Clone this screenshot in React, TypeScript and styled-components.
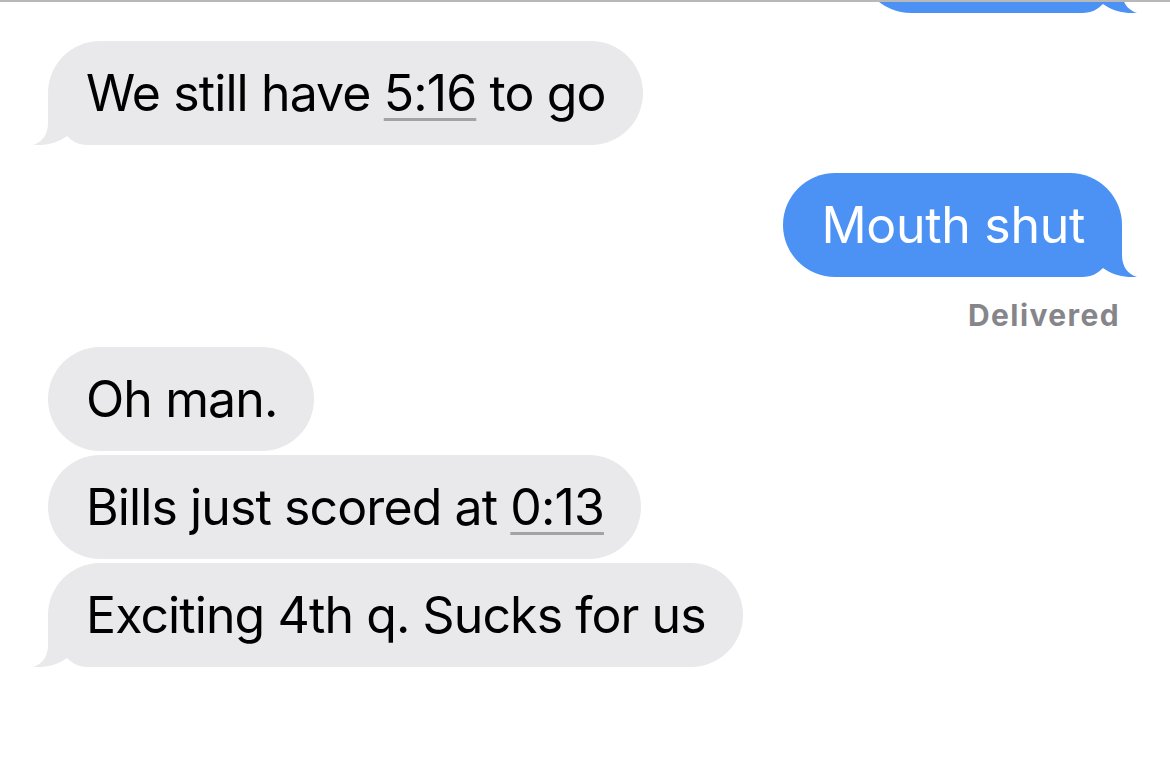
import React from "react";
import styled, { createGlobalStyle } from "styled-components";

const GlobalStyle = createGlobalStyle`
  html, body {
    margin: 0;
    padding: 0;
    background: #ffffff;
    overflow: hidden;
  }
  body {
    font-family: Inter, "Noto Sans", "Liberation Sans", sans-serif;
    -webkit-font-smoothing: antialiased;
  }
`;

const GRAY = "#e9e9eb";
const BLUE = "#4b92f4";

const Screen = styled.div`
  width: 1170px;
  height: 762px;
  overflow: hidden;
  border-top: 2px solid #b8b8b8;
  box-sizing: border-box;
`;

const Thread = styled.div`
  display: flex;
  flex-direction: column;
  padding: 0 48px;
  margin-top: -93px;
`;

interface RowProps {
  mine?: boolean;
  gap?: number;
}
const Row = styled.div<RowProps>`
  display: flex;
  justify-content: ${({ mine }) => (mine ? "flex-end" : "flex-start")};
  margin-top: ${({ gap }) => gap ?? 0}px;
`;

interface BubbleProps {
  mine?: boolean;
}
const Bubble = styled.div<BubbleProps>`
  position: relative;
  z-index: 0;
  display: flex;
  align-items: center;
  height: 104px;
  padding: 0 37px 0 38px;
  border-radius: 52px;
  background: ${({ mine }) => (mine ? BLUE : GRAY)};
  color: ${({ mine }) => (mine ? "#ffffff" : "#000000")};
  font-size: 50px;
  letter-spacing: ${({ mine }) => (mine ? "-0.3px" : "-0.9px")};
  white-space: nowrap;
  box-sizing: border-box;
`;

const Filler = styled.span`
  display: inline-block;
  width: 188px;
`;

const TimeLink = styled.span`
  text-decoration: underline;
  text-decoration-color: #a3a3a6;
  text-decoration-thickness: 3px;
  text-underline-offset: 7px;
`;

interface TailProps {
  mine?: boolean;
}
const TailSvg = styled.svg<TailProps>`
  position: absolute;
  z-index: -1;
  bottom: 0;
  width: 70px;
  height: 50px;
  ${({ mine }) =>
    mine
      ? "right: -16px; transform: scaleX(-1);"
      : "left: -16px;"}
`;

const Status = styled.div`
  align-self: flex-end;
  margin-top: 20px;
  margin-right: 2px;
  font-size: 30px;
  font-weight: 700;
  color: #86868a;
  letter-spacing: 1.4px;
`;

const Tail = ({ mine }: { mine?: boolean }) => (
  <TailSvg mine={mine} viewBox="0 0 70 50" aria-hidden>
    <path
      d="M16 0 L16 28 C16 40 10 47 1 50 C12 51 26 48 35 41 C40 46 46 50 56 50 L70 50 L70 0 Z"
      fill={mine ? BLUE : GRAY}
    />
  </TailSvg>
);

export default function App() {
  return (
    <>
      <GlobalStyle />
      <Screen>
        <Thread>
          <Row mine>
            <Bubble mine>
              <Filler />
              <Tail mine />
            </Bubble>
          </Row>
          <Row gap={28}>
            <Bubble>
              We still have&nbsp;<TimeLink>5:16</TimeLink>&nbsp;to go
              <Tail />
            </Bubble>
          </Row>
          <Row mine gap={28}>
            <Bubble mine>
              Mouth shut
              <Tail mine />
            </Bubble>
          </Row>
          <Status>Delivered</Status>
          <Row gap={14}>
            <Bubble>Oh man.</Bubble>
          </Row>
          <Row gap={4}>
            <Bubble>
              Bills just scored at&nbsp;<TimeLink>0:13</TimeLink>
            </Bubble>
          </Row>
          <Row gap={4}>
            <Bubble>
              Exciting 4th q. Sucks for us
              <Tail />
            </Bubble>
          </Row>
        </Thread>
      </Screen>
    </>
  );
}
